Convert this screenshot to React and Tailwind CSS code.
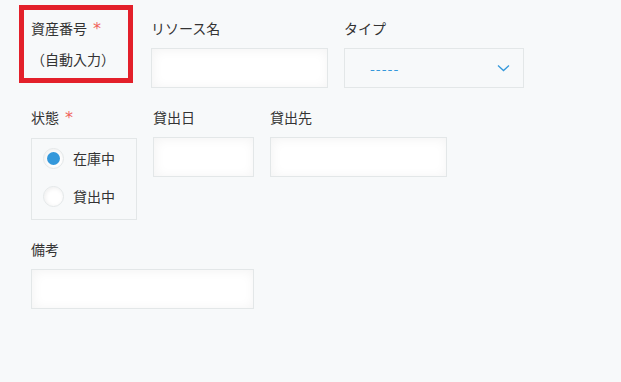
import React from 'react';

const font = { fontFamily: '"Noto Sans CJK JP", "Noto Sans", sans-serif' };

const Required = () => (
  <span className="ml-[6px] font-['DejaVu_Sans',sans-serif] text-[16px] leading-[16px] text-[#f0625a] self-start mt-[3px]">*</span>
);

const Label = ({ children, required }) => (
  <div className="flex items-start h-5 leading-5 text-[14px] text-[#333]">
    <span>{children}</span>
    {required && <Required />}
  </div>
);

const TextInput = ({ width }) => (
  <div className={`${width} h-10 bg-white border border-[#e3e7e8] shadow-[inset_1px_1px_12px_#f3f3f3]`} />
);

const Radio = ({ checked, label }) => (
  <label className="flex items-center h-[38px] gap-[9px] text-[14px] text-[#333]">
    <span className="w-[21px] h-[21px] rounded-full bg-white border border-[#e3e7e8] shadow-[inset_1px_1px_4px_#eeeeee] flex items-center justify-center">
      {checked && <span className="w-[13px] h-[13px] rounded-full bg-[#3498db]" />}
    </span>
    <span>{label}</span>
  </label>
);

const App = () => {
  return (
    <div className="w-[621px] h-[382px] bg-[#f7f9fa] pt-[5px] overflow-hidden" style={font}>
      {/* row 1 */}
      <div className="flex items-start">
        <div className="ml-[19px] w-[114px] h-[78px] border-[5px] border-[#e3202a] pl-[7px] pt-[8px]">
          <Label required>資産番号</Label>
          <div className="mt-[11px] h-5 leading-5 text-[14px] text-[#333]">（自動入力）</div>
        </div>
        <div className="ml-[18px] pt-[13px]">
          <Label>リソース名</Label>
          <div className="mt-[10px]">
            <TextInput width="w-[177px]" />
          </div>
        </div>
        <div className="ml-[16px] pt-[13px]">
          <Label>タイプ</Label>
          <div className="mt-[10px] w-[180px] h-10 border border-[#e3e7e8] bg-[#f7f9fa] flex items-center justify-between pl-[25px] pr-[13px]">
            <span className="text-[14px] text-[#3498db] tracking-[1px]">-----</span>
            <svg width="13" height="8" viewBox="0 0 13 8" fill="none">
              <path d="M1 1.5 L6.5 6.5 L12 1.5" stroke="#3498db" strokeWidth="1.3" />
            </svg>
          </div>
        </div>
      </div>

      {/* row 2 */}
      <div className="flex items-start mt-[19px] ml-[31px] gap-4">
        <div>
          <Label required>状態</Label>
          <div className="mt-[11px] w-[106px] border border-[#e3e7e8] pl-[11px] pb-[4px]">
            <Radio checked label="在庫中" />
            <Radio label="貸出中" />
          </div>
        </div>
        <div>
          <Label>貸出日</Label>
          <div className="mt-[10px]">
            <TextInput width="w-[101px]" />
          </div>
        </div>
        <div>
          <Label>貸出先</Label>
          <div className="mt-[10px]">
            <TextInput width="w-[177px]" />
          </div>
        </div>
      </div>

      {/* row 3 */}
      <div className="mt-[19px] ml-[31px]">
        <Label>備考</Label>
        <div className="mt-[10px]">
          <TextInput width="w-[223px]" />
        </div>
      </div>
    </div>
  );
};

export default App;
